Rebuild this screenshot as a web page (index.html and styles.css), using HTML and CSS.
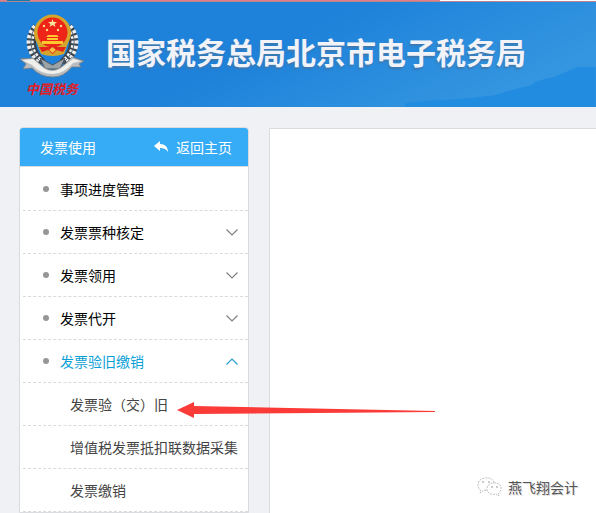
FILE: index.html
```html
<!DOCTYPE html>
<html lang="zh-CN">
<head>
    <meta charset="UTF-8">
    <meta name="viewport" content="width=device-width, initial-scale=1.0">
    <title>国家税务总局北京市电子税务局</title>
    <link rel="stylesheet" href="styles.css">
</head>
<body>
    <div class="top-strip"></div>

    <!-- 页头 -->
    <header class="header">
        <svg class="emblem" viewBox="0 0 72 88" role="img" aria-label="中国税务">
            <!-- 麦穗 -->
            <g fill="none" stroke="#39434c" stroke-width="9">
                <path d="M19 15C11 25 11 40 24 51"/>
                <path d="M50 15C58 25 58 40 45 51"/>
            </g>
            <g fill="none" stroke="#eceef0" stroke-width="7" stroke-dasharray="3 2">
                <path d="M18 15C9 25 10 40 23 50"/>
                <path d="M51 15C60 25 59 40 46 50"/>
            </g>
            <g fill="none" stroke="#5c6670">
                <path d="M18 15C10 25 11 40 24 51"/>
                <path d="M51 15C59 25 58 40 45 51"/>
            </g>
            <path d="M22 46L34.500 53L47 46L42 57H27Z" fill="#9ba2a8" stroke="#4b545c"/>
            <!-- 国徽 -->
            <circle cx="34.500" cy="21" r="18.500" fill="#d5a52c"/>
            <path d="M19 31H50L46 42Q34.500 46 23 42Z" fill="#d5a52c"/>
            <circle cx="34.500" cy="20.500" r="15" fill="#ee2418"/>
            <path d="M21 35H30L34.500 32L39 35H48L45 40L39 38L34.500 42L30 38L24 40Z" fill="#e3241a"/>
            <path d="M34.500 7l1 3h3.500l-2.500 2 1 3-3-2-3 2 1-3-2.500-2h3.500z" fill="#ffe9a0"/>
            <g fill="#ffd98a">
                <circle cx="26" cy="14" r="1.200"/>
                <circle cx="29" cy="18" r="1.200"/>
                <circle cx="40" cy="18" r="1.200"/>
                <circle cx="43" cy="14" r="1.200"/>
            </g>
            <path d="M30 23H39L41 25H28ZM29 26H40V28H29ZM24 29H45V32H24Z" fill="#ffc62e"/>
            <path d="M31 38l3.500-3 3.500 3-3.500 3z" fill="#f1c443"/>
            <!-- 绶带 -->
            <path d="M2 47L15 46L22 52Q34 64 47 52L54 45L66 49L61 52L63 55L54 55Q46 65 35 65Q22 65 14 56L5 57L8 52Z" fill="#b9bdbf" stroke="#777c80" stroke-width=".8"/>
            <path d="M4 48L15 47L22 53Q34 65 47 53L55 47L63 49L55 51Q46 62 35 62Q22 62 14 53Z" fill="#efefec"/>
            <text class="emblem-text" x="8" y="82">中国税务</text>
        </svg>
        <h1 class="site-title">国家税务总局北京市电子税务局</h1>
        <svg class="hills" viewBox="0 0 190 40" preserveAspectRatio="none" aria-hidden="true">
            <path d="M0 36L20 34L66 31L90 28L110 22L126 18L132 14L148 10L160 5L172 0H190V40H0Z" fill="#228ce0"/>
        </svg>
    </header>

    <div class="layout">
        <!-- 左侧菜单 -->
        <aside class="sidebar">
            <div class="sidebar-head">
                <span>发票使用</span>
                <a class="back" href="#">
                    <svg class="back-icon" viewBox="0 0 14 12" aria-hidden="true">
                        <path d="M6 0V3C11 3 14 6 14 11C12 8 10 7 6 7V10L0 5Z" fill="#fff"/>
                    </svg>
                    返回主页
                </a>
            </div>
            <nav class="menu">
                <a class="item" href="#">事项进度管理</a>
                <button class="item" type="button">发票票种核定
                    <svg class="chevron" viewBox="0 0 12 7" aria-hidden="true"><path d="M.5.5L6 6L11.500.5"/></svg>
                </button>
                <button class="item" type="button">发票领用
                    <svg class="chevron" viewBox="0 0 12 7" aria-hidden="true"><path d="M.5.5L6 6L11.500.5"/></svg>
                </button>
                <button class="item" type="button">发票代开
                    <svg class="chevron" viewBox="0 0 12 7" aria-hidden="true"><path d="M.5.5L6 6L11.500.5"/></svg>
                </button>
                <button class="item active" type="button" aria-expanded="true">发票验旧缴销
                    <svg class="chevron" viewBox="0 0 12 7" aria-hidden="true"><path d="M.5 6.500L6 1L11.500 6.500"/></svg>
                </button>
                <a class="item sub" href="#">发票验（交）旧</a>
                <a class="item sub" href="#">增值税发票抵扣联数据采集</a>
                <a class="item sub" href="#">发票缴销</a>
            </nav>
        </aside>
        <main class="content"></main>
    </div>

    <!-- 指向“发票验（交）旧”的箭头 -->
    <svg class="arrow" viewBox="0 0 258 18" aria-hidden="true">
        <path d="M0 9L17 1V5L258 10V11L17 13V17Z" fill="#fb3b38"/>
    </svg>

    <!-- 公众号水印 -->
    <div class="watermark">
        <svg class="wechat" viewBox="0 0 25 20" aria-hidden="true">
            <g fill="#fff" stroke="#a0a0a0" stroke-width=".7" stroke-dasharray="2 1">
                <path d="M4 14C-1 10 0 2 8 1C14 0 18 4 17 8C17 12 12 15 7 13L3 16Z"/>
                <path d="M21 17C26 13 25 7 19 6C13 5 9 9 10 13C11 17 15 18 19 17L22 19Z"/>
            </g>
            <g fill="#888">
                <circle cx="6" cy="5" r=".8"/>
                <circle cx="12" cy="5" r=".8"/>
                <circle cx="15" cy="10" r=".8"/>
                <circle cx="20" cy="10" r=".8"/>
            </g>
        </svg>
        <span>燕飞翔会计</span>
    </div>
</body>
</html>
```
FILE: styles.css
```css
* {
    box-sizing: border-box;
}

body {
    margin: 0;
    height: 100vh;
    display: flex;
    flex-direction: column;
    overflow: hidden;
    position: relative;
    background: #eff1f4;
    color: #000;
    font: 14px/20px "Noto Sans CJK SC", sans-serif;
}

a {
    color: inherit;
    text-decoration: none;
}

.top-strip {
    flex: none;
    height: 2px;
    border-bottom: 1px solid #b98492;
    background: linear-gradient(to right, #e27f85 7px, #0e7fb0 7px, #0e7fb0 30px, #e27f85 30px, #e27f85 440px, #fff 440px);
}

/* 页头 */
.header {
    flex: none;
    position: relative;
    display: flex;
    align-items: flex-start;
    height: 105px;
    padding: 10px 0 0 18px;
    background: linear-gradient(155deg, #1e82da 45%, #3496e0 85%);
}

.emblem {
    flex: none;
    width: 72px;
    height: 88px;
}

.emblem-text {
    fill: #e31b23;
    font: italic bold 13px "Noto Sans CJK SC", sans-serif;
}

.site-title {
    margin: 17px 0 0 16px;
    color: #f1f3f8;
    font-size: 30px;
    line-height: 44px;
    font-weight: bold;
    white-space: nowrap;
    text-shadow: -1px 2px 2px #3f78ae;
}

.hills {
    position: absolute;
    right: 0;
    bottom: 0;
    width: 32%;
    height: 40px;
}

/* 主体 */
.layout {
    flex: 1;
    display: flex;
    gap: 20px;
    min-height: 0;
    padding: 20px 0 0 19px;
}

.sidebar {
    flex: none;
    width: 230px;
    border: 1px solid #dadce0;
    border-radius: 4px 4px 0 0;
    background: #fff;
}

.sidebar-head {
    display: flex;
    align-items: center;
    justify-content: space-between;
    height: 39px;
    padding: 0 16px 0 20px;
    border-bottom: 1px solid #d5dbe2;
    border-radius: 3px 3px 0 0;
    background: #35acf5;
    color: #fff;
}

.back {
    display: flex;
    align-items: center;
    gap: 8px;
}

.back-icon {
    width: 14px;
    height: 12px;
}

.menu {
    padding: 1px 0 0 3px;
}

.item {
    display: flex;
    align-items: center;
    width: 100%;
    height: 43px;
    padding: 0 10px 0 20px;
    border: 0;
    border-bottom: 1px dashed #dadada;
    background: none;
    color: #000;
    font: inherit;
    text-align: left;
    white-space: nowrap;
    cursor: pointer;
}

.item::before {
    content: "";
    width: 6px;
    height: 6px;
    margin-right: 11px;
    border-radius: 50%;
    background: #969696;
}

.item.active {
    color: #0c9fd6;
}

.item.sub {
    padding: 0 0 0 47px;
    color: #444;
}

.item.sub::before {
    display: none;
}

.chevron {
    width: 12px;
    height: 7px;
    margin-left: auto;
    fill: none;
    stroke: #808080;
    stroke-width: 1.2;
}

.active .chevron {
    stroke: #2b9cc8;
}

.content {
    flex: 1;
    margin-top: 1px;
    border: 1px solid #dadce0;
    border-width: 1px 0 0 1px;
    background: #fff;
}

/* 覆盖在页面上的标注 */
.arrow {
    position: absolute;
    left: 177px;
    top: 401px;
    width: 258px;
    height: 18px;
}

.watermark {
    position: absolute;
    right: 18px;
    bottom: 16px;
    display: flex;
    align-items: center;
    gap: 6px;
    color: #555;
    text-shadow: 1px 1px 0 #ddd;
}

.wechat {
    width: 25px;
    height: 20px;
}
```
